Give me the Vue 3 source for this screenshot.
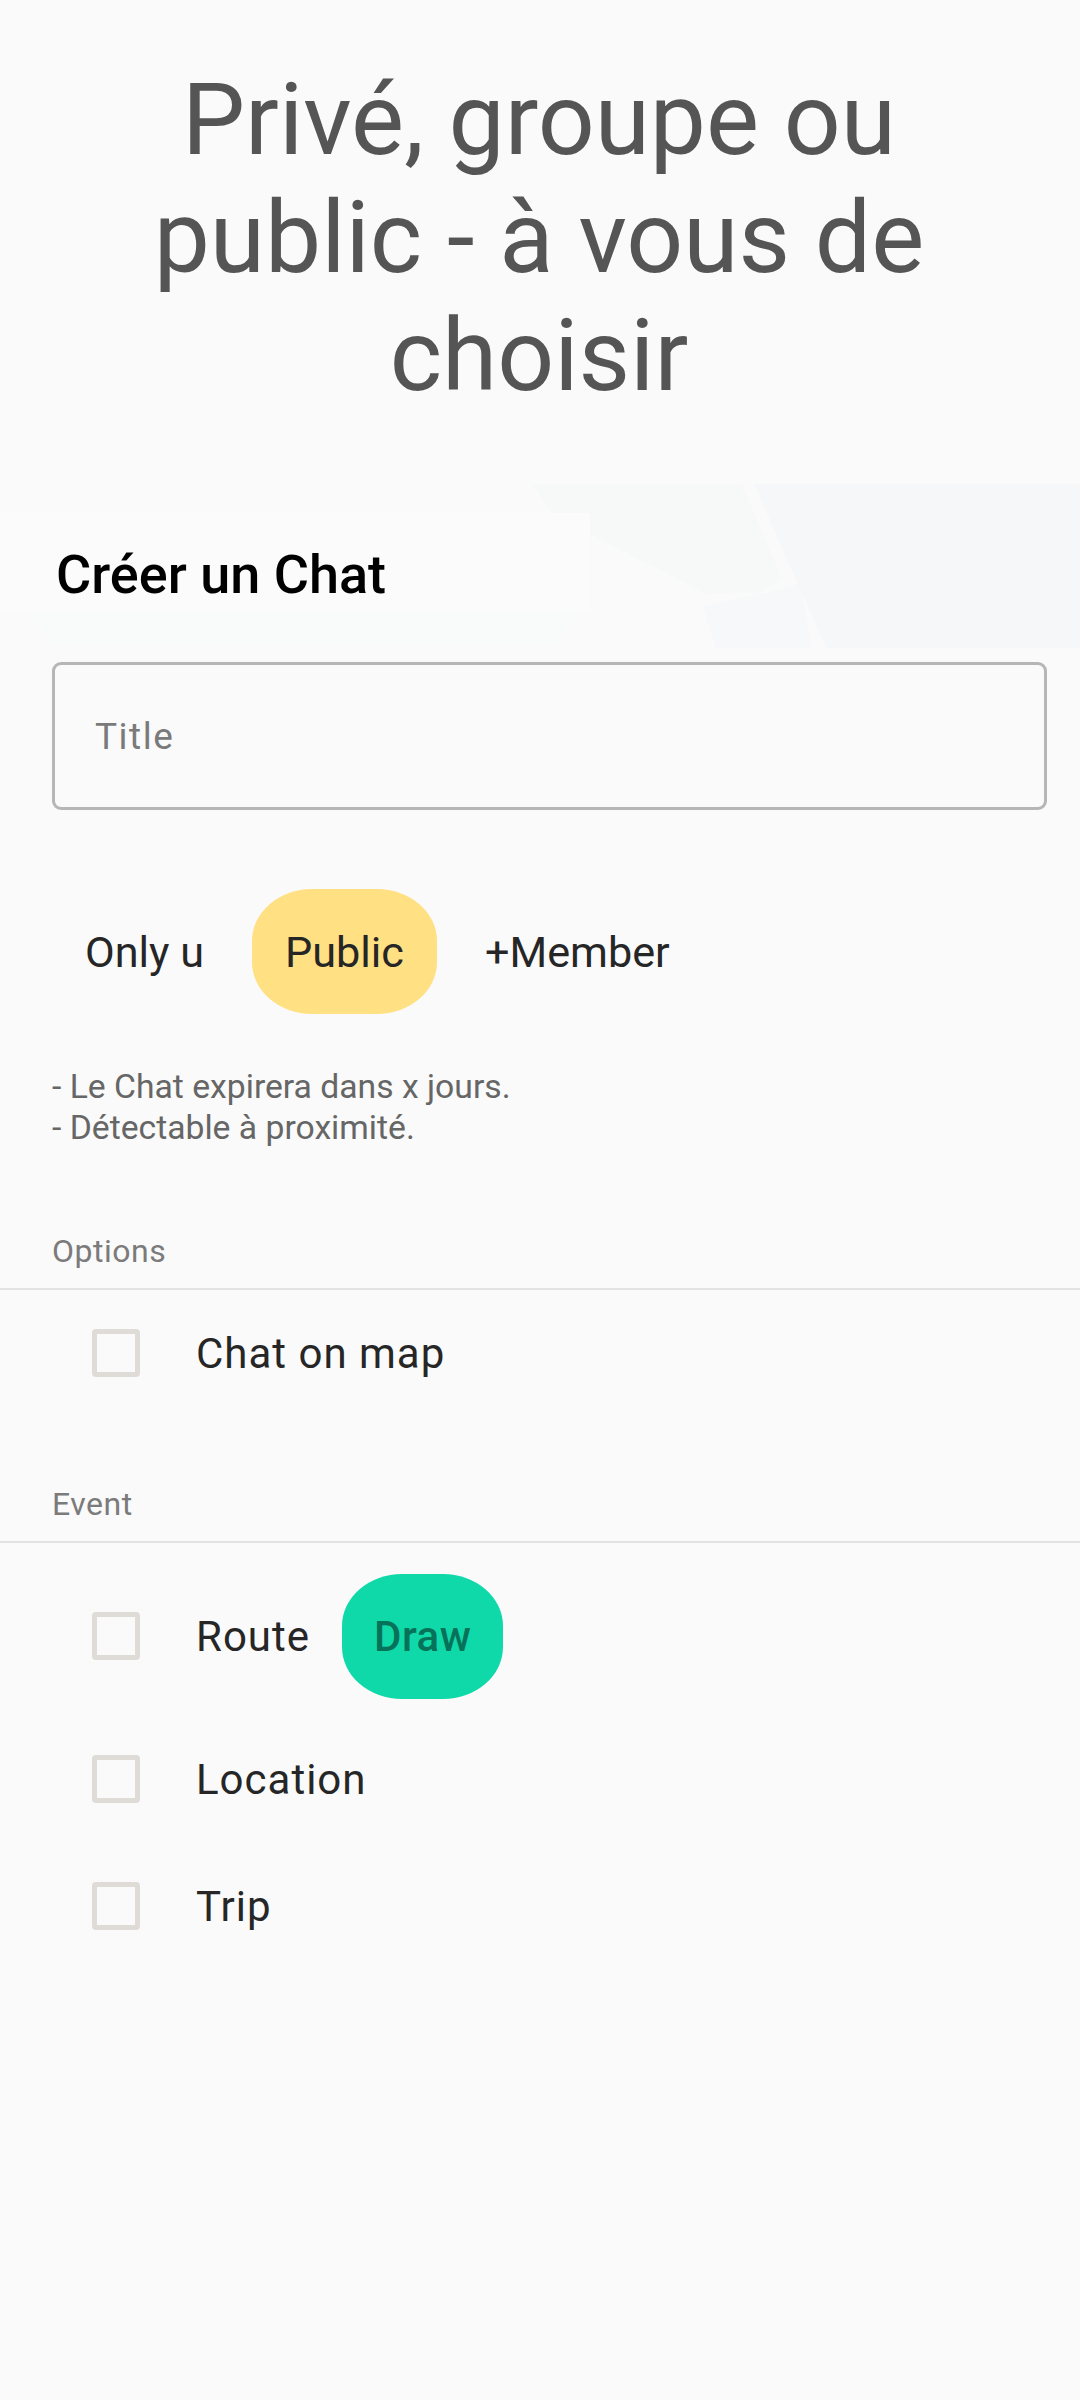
<template>
  <div class="page">
    <h1 class="headline">Privé, groupe ou public - à vous de choisir</h1>

    <section class="map-band">
      <svg class="map-bg" viewBox="0 0 1080 164" preserveAspectRatio="none">
        <rect x="0" y="0" width="1080" height="164" fill="#fafafa" />
        <path d="M0 29H590V129H0Z" fill="#fbfbfb" />
        <path d="M30 129H575L560 160H48Z" fill="#f9fafa" />
        <path d="M532 0H742L782 95L762 108L706 110L590 50V29H552Z" fill="#f7f8f8" />
        <path d="M703 122L770 108L800 100L812 164H716Z" fill="#f7f8f9" />
        <path d="M754 0H1080V164H826Z" fill="#f6f7f9" />
      </svg>
      <h2 class="band-title">Créer un Chat</h2>
    </section>

    <div class="form">
      <div class="title-field">
        <span>Title</span>
      </div>

      <div class="chips">
        <button v-for="c in scopes" :key="c" class="chip" :class="{ 'chip-on': c === scope }" @click="scope = c">
          {{ c }}
        </button>
      </div>

      <p class="hint">- Le Chat expirera dans x jours.<br />- Détectable à proximité.</p>
    </div>

    <div class="group-label options-label">Options</div>
    <div class="rows">
      <label class="row"><span class="box"></span><span class="row-text">Chat on map</span></label>
    </div>

    <div class="group-label event-label">Event</div>
    <div class="rows">
      <div class="row row-route">
        <span class="box"></span><span class="row-text">Route</span>
        <button class="draw">Draw</button>
      </div>
      <label class="row row-location"><span class="box"></span><span class="row-text">Location</span></label>
      <label class="row row-trip"><span class="box"></span><span class="row-text">Trip</span></label>
    </div>
  </div>
</template>

<script setup>
import { ref } from 'vue'

const scopes = ['Only u', 'Public', '+Member']
const scope = ref('Public')
</script>

<style>
html,
body {
  margin: 0;
  background: #fafafa;
}
</style>

<style scoped>
.page {
  width: 1080px;
  height: 2400px;
  overflow: hidden;
  background: #fafafa;
  font-family: Roboto, "Liberation Sans", sans-serif;
  color: #212121;
}

.headline {
  margin: 0;
  height: 484px;
  box-sizing: border-box;
  padding: 61px 82px 0 80px;
  font-size: 100px;
  line-height: 118px;
  font-weight: 400;
  text-align: center;
  color: #555;
}

.map-band {
  position: relative;
  height: 164px;
  box-sizing: border-box;
  padding: 61px 56px 0;
}

.map-bg {
  position: absolute;
  inset: 0;
  width: 100%;
  height: 100%;
}

.band-title {
  position: relative;
  margin: 0;
  font-size: 54px;
  line-height: 60px;
  font-weight: 500;
  color: #000;
}

.form {
  padding: 14px 33px 0 52px;
}

.title-field {
  height: 148px;
  box-sizing: border-box;
  display: flex;
  align-items: center;
  padding-left: 40px;
  border: 3px solid #b6b6b6;
  border-radius: 9px;
  font-size: 37px;
  letter-spacing: 1.5px;
  color: #7a7a7a;
}

.chips {
  display: flex;
  gap: 15px;
  margin-top: 79px;
}

.chip {
  height: 125px;
  padding: 2px 33px 0;
  border: 0;
  border-radius: 60px / 52px;
  background: transparent;
  font: 400 43.2px Roboto, "Liberation Sans", sans-serif;
  color: #262626;
}

.chip-on {
  background: #ffe082;
}

.hint {
  margin: 52px 0 0;
  font-size: 33.7px;
  line-height: 41px;
  color: #666;
}

.group-label {
  padding: 0 52px 18px;
  border-bottom: 2px solid #e2e2e2;
  font-size: 32px;
  line-height: 38px;
  letter-spacing: 0.5px;
  color: #7b7b7b;
}

.options-label {
  margin-top: 84px;
}

.event-label {
  margin-top: 69px;
}

.rows {
  padding-left: 92px;
}

.row {
  display: flex;
  align-items: center;
  height: 126px;
}

.row-route {
  margin-top: 30px;
}

.row-location {
  margin-top: 17px;
}

.row-trip {
  margin-top: 1px;
}

.box {
  width: 48px;
  height: 48px;
  box-sizing: border-box;
  border: 5px solid #dfdbd7;
  border-radius: 4px;
  flex: none;
}

.row-text {
  margin-left: 56px;
  font-size: 42px;
  letter-spacing: 1px;
  color: #262626;
}

.draw {
  height: 125px;
  margin-left: 32px;
  padding: 0 32px;
  border: 0;
  border-radius: 60px / 52px;
  background: #10d9a9;
  font: 500 42px Roboto, "Liberation Sans", sans-serif;
  letter-spacing: 0.5px;
  color: #06725a;
}
</style>
